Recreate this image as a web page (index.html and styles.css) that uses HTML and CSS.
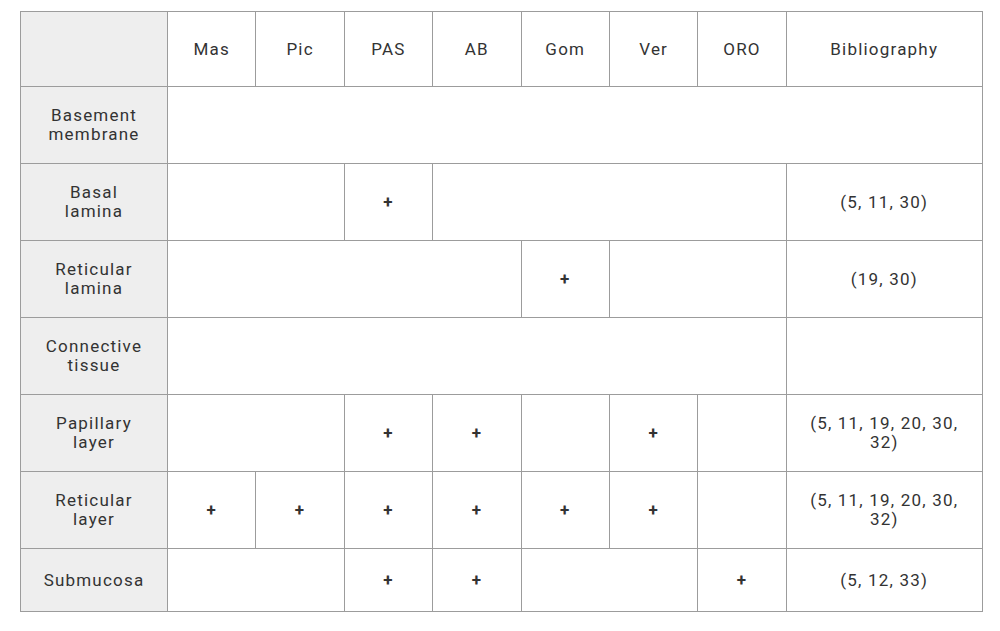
FILE: index.html
```html
<!DOCTYPE html>
<html>
<head>
<meta charset="utf-8">
<link rel="stylesheet" href="styles.css">
</head>
<body>
<table class="stain-table">
  <colgroup>
    <col class="c-head">
    <col class="c-stain"><col class="c-stain"><col class="c-stain"><col class="c-stain">
    <col class="c-stain"><col class="c-stain"><col class="c-stain">
    <col class="c-bib">
  </colgroup>
  <tr class="r-header">
    <th class="corner"></th>
    <th>Mas</th><th>Pic</th><th>PAS</th><th>AB</th><th>Gom</th><th>Ver</th><th>ORO</th><th>Bibliography</th>
  </tr>
  <tr class="r-body">
    <th class="row-head">Basement<br>membrane</th>
    <td colspan="9"></td>
  </tr>
  <tr class="r-body">
    <th class="row-head">Basal<br>lamina</th>
    <td colspan="2"></td><td class="plus">+</td><td colspan="4"></td><td>(5, 11, 30)</td>
  </tr>
  <tr class="r-body">
    <th class="row-head">Reticular<br>lamina</th>
    <td colspan="4"></td><td class="plus">+</td><td colspan="2"></td><td>(19, 30)</td>
  </tr>
  <tr class="r-body">
    <th class="row-head">Connective<br>tissue</th>
    <td colspan="7"></td><td></td>
  </tr>
  <tr class="r-body">
    <th class="row-head">Papillary<br>layer</th>
    <td colspan="2"></td><td class="plus">+</td><td class="plus">+</td><td></td><td class="plus">+</td><td></td><td>(5, 11, 19, 20, 30, 32)</td>
  </tr>
  <tr class="r-body">
    <th class="row-head">Reticular<br>layer</th>
    <td class="plus">+</td><td class="plus">+</td><td class="plus">+</td><td class="plus">+</td><td class="plus">+</td><td class="plus">+</td><td></td><td>(5, 11, 19, 20, 30, 32)</td>
  </tr>
  <tr class="r-last">
    <th class="row-head">Submucosa</th>
    <td colspan="2"></td><td class="plus">+</td><td class="plus">+</td><td colspan="2"></td><td class="plus">+</td><td>(5, 12, 33)</td>
  </tr>
</table>
</body>
</html>
```

FILE: styles.css
```css
html, body {
  margin: 0;
  background: #ffffff;
}
body {
  padding: 11px 0 0 20px;
  font-family: Roboto, "Liberation Sans", sans-serif;
  color: #333333;
}
.stain-table {
  border-collapse: collapse;
  table-layout: fixed;
  width: 962px;
  font-size: 17px;
  letter-spacing: 1.2px;
  line-height: 19px;
}
.c-head { width: 147px; }
.c-stain { width: 88.4px; }
.c-bib { width: 196px; }
.stain-table th,
.stain-table td {
  border: 1px solid #9c9c9c;
  padding: 0 14px;
  text-align: center;
  vertical-align: middle;
  font-weight: 400;
}
.stain-table th.row-head,
.stain-table th.corner {
  background: #eeeeee;
}
.r-header { height: 75px; }
.r-body { height: 77px; }
.r-last { height: 63px; }
.stain-table td.plus {
  font-weight: 700;
}
```
